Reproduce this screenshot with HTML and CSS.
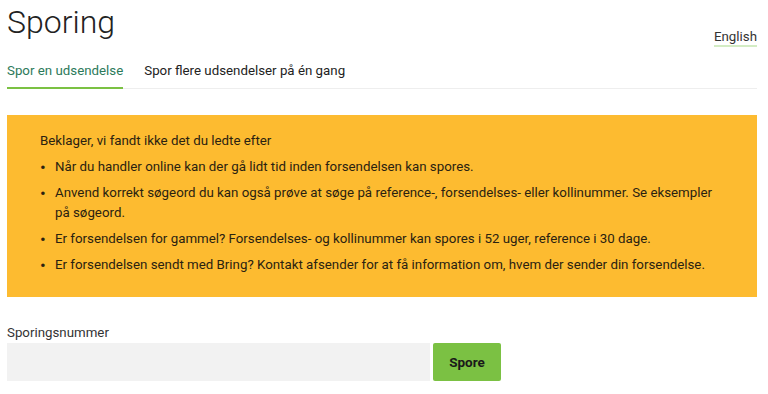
FILE: index.html
```html
<!DOCTYPE html>
<html lang="da">
  <head>
    <meta charset="UTF-8" />
    <meta name="viewport" content="width=device-width, initial-scale=1.0" />
    <title>Sporing</title>
    <link rel="stylesheet" href="styles.css">
  </head>
  <body>
    <div class="top">
      <h1>Sporing</h1>
      <a class="lang" href="#">English</a>
    </div>
    <div class="tabs">
      <a class="tab active" href="#">Spor en udsendelse</a>
      <a class="tab" href="#">Spor flere udsendelser på én gang</a>
    </div>
    <div class="notice">
      <p>Beklager, vi fandt ikke det du ledte efter</p>
      <ul>
        <li>Når du handler online kan der gå lidt tid inden forsendelsen kan spores.</li>
        <li>Anvend korrekt søgeord du kan også prøve at søge på reference-, forsendelses- eller kollinummer. Se eksempler på søgeord.</li>
        <li>Er forsendelsen for gammel? Forsendelses- og kollinummer kan spores i 52 uger, reference i 30 dage.</li>
        <li>Er forsendelsen sendt med Bring? Kontakt afsender for at få information om, hvem der sender din forsendelse.</li>
      </ul>
    </div>
    <form class="search">
      <label for="num">Sporingsnummer</label>
      <div class="row">
        <input type="text" id="num" />
        <button type="button">Spore</button>
      </div>
    </form>
  </body>
</html>
```

FILE: styles.css
```css
body {
  margin: 0;
  padding: 0 11px 0 7px;
  font-family: Roboto, "Noto Sans", sans-serif;
  color: #222;
  background-color: #fff;
}

.top {
  display: flex;
  justify-content: space-between;
  align-items: flex-end;
}

h1 {
  font-size: 32px;
  font-weight: 300;
  margin: 0;
  padding-top: 2px;
  line-height: 40px;
  color: #222;
}

.lang {
  font-size: 13.3px;
  color: #333;
  text-decoration: none;
  border-bottom: 2px solid #d3ecc4;
  line-height: 16px;
  margin-bottom: -5px;
}

.tabs {
  display: flex;
  gap: 21px;
  margin-top: 13px;
  border-bottom: 1px solid #eee;
}

.tab {
  font-size: 13.3px;
  color: #222;
  text-decoration: none;
  padding: 8px 0 9px 0;
  border-bottom: 2px solid transparent;
  margin-bottom: -1px;
}

.tab.active {
  color: #2c7a5a;
  border-bottom-color: #7bc143;
}

.notice {
  background-color: #fdbb30;
  margin-top: 26px;
  padding: 16px 33px 16px 33px;
  font-size: 13.3px;
  line-height: 20px;
  color: #2a2210;
}

.notice p {
  margin: 0 0 6px 0;
}

.notice ul {
  margin: 0;
  padding: 0;
  list-style: none;
}

.notice li {
  display: flex;
  margin-bottom: 6px;
}

.notice li::before {
  content: "•";
  flex: 0 0 15px;
  font-size: 17px;
  line-height: 20px;
}

.search {
  margin-top: 28px;
}

.search label {
  display: block;
  font-size: 13.3px;
  color: #333;
  line-height: 16px;
}

.row {
  display: flex;
  gap: 3px;
  margin-top: 2px;
}

.row input {
  width: 423px;
  height: 38px;
  border: none;
  background-color: #f2f2f2;
  box-sizing: border-box;
}

.row button {
  width: 68px;
  height: 38px;
  border: none;
  border-radius: 2px;
  background-color: #7bc143;
  font-family: Roboto, "Noto Sans", sans-serif;
  font-size: 13.5px;
  font-weight: 700;
  color: #1a1a1a;
}
```
